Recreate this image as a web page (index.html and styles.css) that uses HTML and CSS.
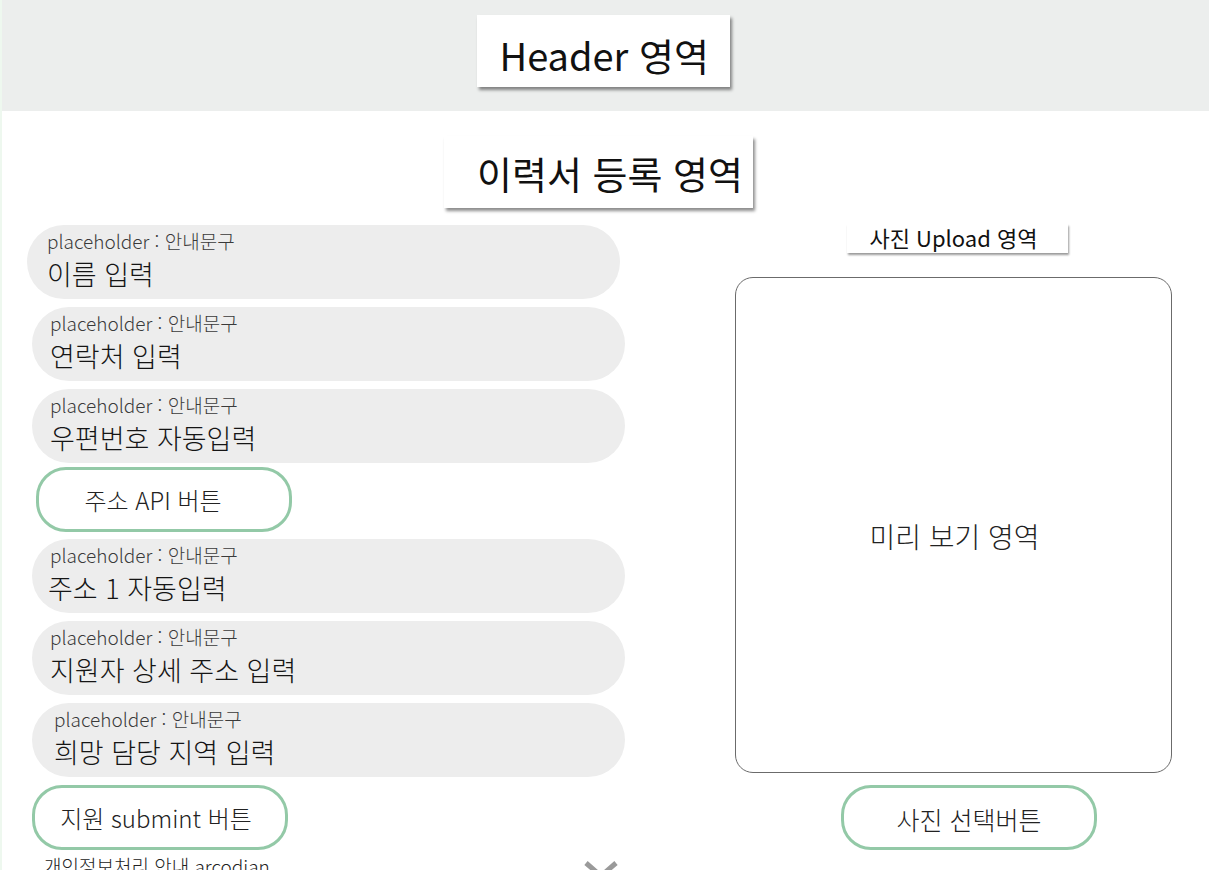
FILE: index.html
```html
<!DOCTYPE html>
<html lang="ko">
  <head>
    <meta charset="utf-8" />
    <title>이력서 등록</title>
    <meta name="viewport" content="width=device-width, initial-scale=1" />
    <link rel="stylesheet" href="styles.css">
  </head>
  <body>
    <header class="site-header">
      <div class="label-box header-box">Header 영역</div>
    </header>
    <main class="resume">
      <div class="title-row">
        <h1 class="label-box title-box">이력서 등록 영역</h1>
      </div>
      <div class="columns">
        <div class="form">
          <div class="field">
            <span class="hint">placeholder : 안내문구</span>
            <span class="value">이름 입력</span>
          </div>
          <div class="field shift">
            <span class="hint">placeholder : 안내문구</span>
            <span class="value">연락처 입력</span>
          </div>
          <div class="field shift">
            <span class="hint">placeholder : 안내문구</span>
            <span class="value">우편번호 자동입력</span>
          </div>
          <button class="pill-btn api-btn">주소 API 버튼</button>
          <div class="field shift">
            <span class="hint">placeholder : 안내문구</span>
            <span class="value tight">주소 1 자동입력</span>
          </div>
          <div class="field shift">
            <span class="hint">placeholder : 안내문구</span>
            <span class="value">지원자 상세 주소 입력</span>
          </div>
          <div class="field shift inset">
            <span class="hint">placeholder : 안내문구</span>
            <span class="value">희망 담당 지역 입력</span>
          </div>
          <button class="pill-btn submit-btn">지원 submint 버튼</button>
          <div class="accordion">
            <span>개인정보처리 안내 arcodian</span>
            <svg class="chevron" width="36" height="20" viewBox="0 0 36 20">
              <path d="M3 3 L18 16 L33 3" fill="none" stroke="#9a9a9a" stroke-width="5" />
            </svg>
          </div>
        </div>
        <div class="photo">
          <div class="label-box upload-box">사진 Upload 영역</div>
          <div class="preview">미리 보기 영역</div>
          <button class="pill-btn photo-btn">사진 선택버튼</button>
        </div>
      </div>
    </main>
  </body>
</html>
```

FILE: styles.css
```css
html {
  font-family: "Noto Sans CJK KR", "Noto Sans", sans-serif;
  font-size: 16px;
  color: #111;
}

body {
  margin: 0;
  background-color: white;
  border-left: 2px solid #eef8ef;
  height: 870px;
  overflow: hidden;
}

.site-header {
  height: 111px;
  background-color: #eceeed;
  display: flex;
  justify-content: center;
  align-items: flex-start;
}

.label-box {
  background-color: white;
  box-shadow: 2px 3px 3px rgba(0, 0, 0, 0.45);
}

.header-box {
  box-sizing: border-box;
  width: 253px;
  height: 72px;
  margin: 15px 0 0 -5px;
  padding: 22px 0 0 23px;
  font-size: 38px;
  font-weight: 400;
  line-height: 36px;
}

.title-row {
  display: flex;
  justify-content: center;
  padding-top: 25px;
}

.title-box {
  box-sizing: border-box;
  width: 309px;
  height: 72px;
  margin: 0 0 0 -14px;
  padding: 17px 0 0 33px;
  font-size: 38px;
  font-weight: 400;
  line-height: 40px;
}

.columns {
  display: flex;
  padding-top: 17px;
}

.form {
  width: 598px;
  margin-left: 25px;
}

.field {
  box-sizing: border-box;
  width: 593px;
  height: 74px;
  margin-bottom: 8px;
  padding: 3px 0 0 20px;
  background-color: #ededed;
  border-radius: 37px;
  display: flex;
  flex-direction: column;
}

.field.shift {
  margin-left: 5px;
  padding-left: 18px;
}

.field.inset {
  padding-left: 22px;
}

.hint {
  font-size: 19px;
  font-weight: 300;
  color: #3a3a3a;
  line-height: 26px;
}

.value {
  font-size: 27px;
  font-weight: 300;
  color: #151515;
  line-height: 40px;
}

.value.tight {
  margin-left: -2px;
}

.pill-btn {
  box-sizing: border-box;
  height: 65px;
  border: 3px solid #93c9a7;
  border-radius: 30px;
  background-color: white;
  font-family: inherit;
  font-size: 22px;
  font-weight: 300;
  color: #222;
  display: block;
}

.api-btn {
  width: 256px;
  margin: -4px 0 7px 9px;
  padding: 0 22px 0 0;
  font-size: 24px;
}

.submit-btn {
  width: 256px;
  margin: 0 0 0 5px;
  padding: 0 8px 0 0;
  font-size: 24px;
}

.accordion {
  display: flex;
  justify-content: space-between;
  align-items: flex-start;
  width: 575px;
  margin: 5px 0 0 17px;
  font-size: 19px;
  font-weight: 300;
  color: #222;
  line-height: 22px;
}

.chevron {
  margin-top: 5px;
}

.photo {
  width: 437px;
  margin-left: 110px;
  display: flex;
  flex-direction: column;
}

.upload-box {
  box-sizing: border-box;
  width: 221px;
  height: 29px;
  margin: -1px 0 0 112px;
  padding-right: 8px;
  font-size: 22px;
  font-weight: 400;
  line-height: 27px;
  text-align: center;
  box-shadow: 1px 2px 2px rgba(0, 0, 0, 0.4);
}

.preview {
  box-sizing: border-box;
  height: 496px;
  margin-top: 24px;
  border: 1px solid #6b6b6b;
  border-radius: 18px;
  display: flex;
  justify-content: center;
  align-items: center;
  padding: 22px 0 0 2px;
  font-size: 28px;
  font-weight: 300;
  color: #222;
}

.photo-btn {
  width: 256px;
  margin: 12px 0 0 106px;
  padding-top: 3px;
  font-size: 25px;
}
```
